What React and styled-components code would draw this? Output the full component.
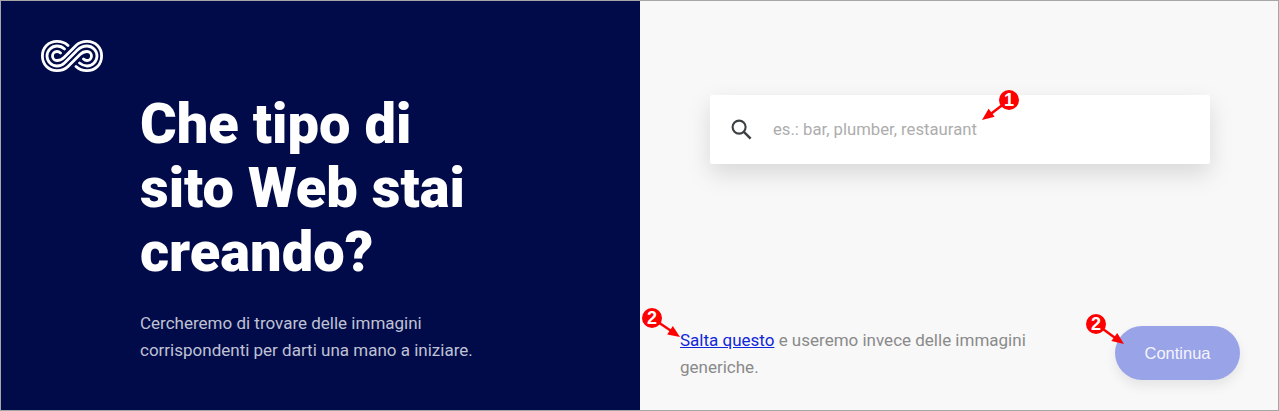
import React from "react";
import styled, { createGlobalStyle } from "styled-components";

const GlobalStyle = createGlobalStyle`
  html, body {
    margin: 0;
    padding: 0;
    background: #f8f8f8;
  }
  body {
    font-family: Roboto, "Liberation Sans", sans-serif;
  }
`;

function Logo() {
  return (
    <LogoMark viewBox="0 0 62 32" fill="none" stroke="#fff" strokeWidth="2.8" strokeLinecap="round">
      <path d="M27 5.5 C24 2.5 20.5 1.4 16 1.4 C7.5 1.4 1.4 7.5 1.4 16 C1.4 24.5 7.5 30.6 16 30.6 C20.5 30.6 24 29.5 27 26.5 L39 14.5 C41 12.5 43 11.5 46 11.5 C48.5 11.5 50.5 13.5 50.5 16 C50.5 18.5 48.5 20.5 46 20.5 C44.5 20.5 43.5 20 42.5 19" />
      <path d="M35 26.5 C38 29.5 41.5 30.6 46 30.6 C54.5 30.6 60.6 24.5 60.6 16 C60.6 7.5 54.5 1.4 46 1.4 C41.5 1.4 38 2.5 35 5.5 L23 17.5 C21 19.5 19 20.5 16 20.5 C13.5 20.5 11.5 18.5 11.5 16 C11.5 13.5 13.5 11.5 16 11.5 C17.5 11.5 18.5 12 19.5 13" />
      <path d="M23.5 9 C21.5 7 19 6 16 6 C10.5 6 6 10.5 6 16 C6 21.5 10.5 26 16 26 C19 26 21.5 25 23.5 23 L35.5 11 C37.5 9 40 6 46 6 C51.5 6 56 10.5 56 16 C56 21.5 51.5 26 46 26 C43 26 41 25 38.5 23" />
    </LogoMark>
  );
}

function Callout({ number, x, y, badgeX, badgeY, line, head }) {
  return (
    <Annotation $x={x} $y={y}>
      <ArrowSvg viewBox="0 0 60 40" width="60" height="40">
        <path d={line} stroke="#f00" strokeWidth="2.4" fill="none" />
        <path d={head} fill="#f00" />
      </ArrowSvg>
      <Badge $x={badgeX} $y={badgeY}>{number}</Badge>
    </Annotation>
  );
}

function App() {
  return (
    <>
      <GlobalStyle />
      <Frame>
        <Intro>
          <Logo />
          <IntroBody>
            <Heading>Che tipo di sito Web stai creando?</Heading>
            <Lead>
              Cercheremo di trovare delle immagini corrispondenti per darti una
              mano a iniziare.
            </Lead>
          </IntroBody>
        </Intro>
        <Panel>
          <SearchBox>
            <SearchIcon viewBox="0 0 24 24" fill="none" stroke="#3c4043" strokeWidth="2.2">
              <circle cx="9.5" cy="9.5" r="6.8" />
              <path d="M14.5 14.5 L21.5 21.5" strokeWidth="2.6" />
            </SearchIcon>
            <SearchText>es.: bar, plumber, restaurant</SearchText>
          </SearchBox>
          <Footer>
            <Note>
              <SkipLink href="#">Salta questo</SkipLink> e useremo invece delle
              immagini generiche.
            </Note>
            <ContinueButton>Continua</ContinueButton>
          </Footer>
        </Panel>
        <Callout
          number="1"
          x={975}
          y={85}
          badgeX={23}
          badgeY={4}
          line="M33 14 L12 30"
          head="M6 34 L12.6 22.8 L18.6 30.8 Z"
        />
        <Callout
          number="2"
          x={641}
          y={307}
          badgeX={0}
          badgeY={0}
          line="M10 10 L30 23.5"
          head="M38 29 L25.2 26.5 L30.8 18.1 Z"
        />
        <Callout
          number="2"
          x={1085}
          y={313}
          badgeX={0}
          badgeY={0}
          line="M10 10 L30 24.5"
          head="M38 30 L25.4 27 L31.2 19 Z"
        />
      </Frame>
    </>
  );
}

const Frame = styled.div`
  position: relative;
  box-sizing: border-box;
  width: 1279px;
  height: 411px;
  display: grid;
  grid-template-columns: 639px 1fr;
  border: 1px solid #a6a6a6;
  overflow: hidden;
`;

const Intro = styled.section`
  box-sizing: border-box;
  background: #020b4a;
  padding: 39px 40px 0;
`;

const LogoMark = styled.svg`
  display: block;
  width: 62px;
  height: 32px;
`;

const IntroBody = styled.div`
  padding: 20px 0 0 99px;
`;

const Heading = styled.h1`
  margin: 0;
  width: 360px;
  color: #fff;
  font-size: 56px;
  line-height: 64px;
  font-weight: 900;
`;

const Lead = styled.p`
  margin: 26px 0 0;
  width: 350px;
  color: #bfc2d4;
  font-size: 17px;
  line-height: 27px;
`;

const Panel = styled.section`
  display: flex;
  flex-direction: column;
  justify-content: space-between;
  background: #f8f8f8;
  padding: 94px 38px 29px 40px;
`;

const SearchBox = styled.div`
  display: flex;
  align-items: center;
  gap: 20px;
  box-sizing: border-box;
  width: 500px;
  height: 69px;
  margin-left: 30px;
  padding: 0 20px;
  background: #fff;
  border-radius: 2px;
  box-shadow: 0 10px 24px rgba(0, 0, 0, 0.13);
`;

const SearchIcon = styled.svg`
  width: 23px;
  height: 23px;
  flex: none;
`;

const SearchText = styled.span`
  color: #adadad;
  font-size: 16.7px;
`;

const Footer = styled.div`
  display: flex;
  align-items: flex-start;
  justify-content: space-between;
`;

const Note = styled.p`
  margin: 0;
  padding-top: 1px;
  width: 375px;
  color: #8a8a8a;
  font-size: 17px;
  line-height: 27px;
`;

const SkipLink = styled.a`
  color: #0f27d8;
`;

const ContinueButton = styled.button`
  width: 125px;
  height: 54px;
  border: none;
  border-radius: 27px;
  background: #99a3e8;
  color: #f4f5fd;
  font-family: "Liberation Sans", Arial, sans-serif;
  font-size: 16.5px;
  box-shadow: 0 6px 12px rgba(0, 0, 0, 0.08);
`;

const Annotation = styled.div`
  position: absolute;
  left: ${(p) => p.$x}px;
  top: ${(p) => p.$y}px;
  width: 60px;
  height: 40px;
`;

const ArrowSvg = styled.svg`
  position: absolute;
  left: 0;
  top: 0;
`;

const Badge = styled.span`
  position: absolute;
  left: ${(p) => p.$x}px;
  top: ${(p) => p.$y}px;
  width: 20px;
  height: 20px;
  border-radius: 50%;
  background: #f00;
  color: #fff;
  font-family: "Liberation Sans", Arial, sans-serif;
  font-size: 18px;
  font-weight: 700;
  line-height: 20px;
  text-align: center;
`;

export default App;
